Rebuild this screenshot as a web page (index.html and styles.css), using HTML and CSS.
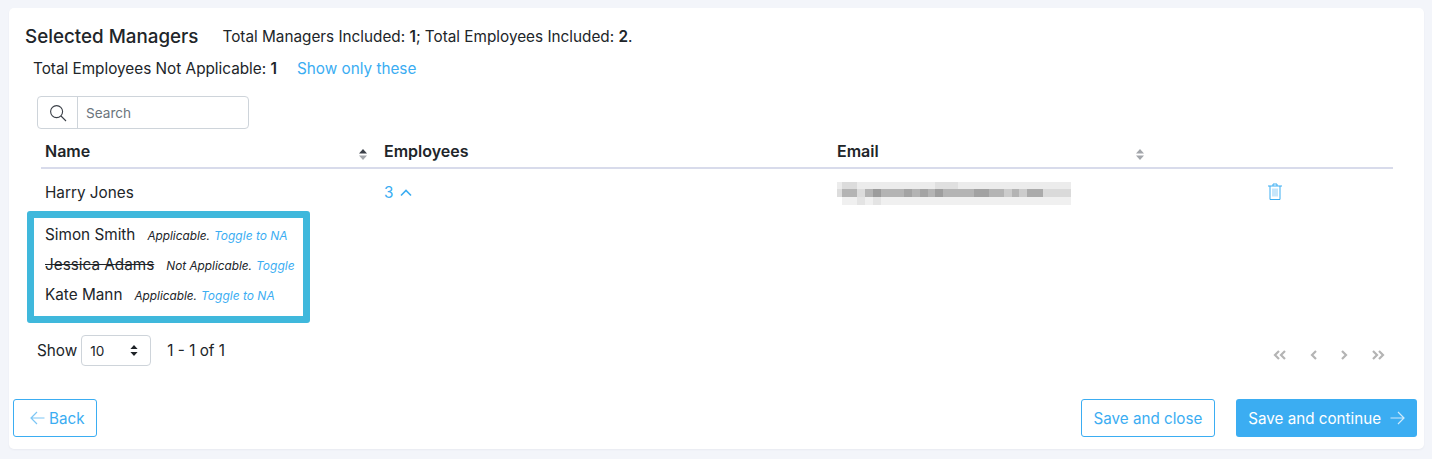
FILE: index.html
```html
<!DOCTYPE html>
<html lang="en">
<head>
<meta charset="utf-8">
<title>Selected Managers</title>
<link rel="stylesheet" href="styles.css">
</head>
<body>
<main class="card">
  <div class="summary">
    <h2 class="title">Selected Managers</h2>
    <p class="summary-text">Total Managers Included: <b>1</b>; Total Employees Included: <b>2</b>.</p>
  </div>
  <div class="na-line">
    <span>Total Employees Not Applicable: <b>1</b></span>
    <a class="link na-link" href="#">Show only these</a>
  </div>
  <div class="search">
    <span class="search-icon">
      <svg width="18" height="18" viewBox="0 0 18 18" fill="none" stroke="#3a3f47" stroke-width="1.1"><circle cx="7.6" cy="7.600" r="6"/><path d="M12 12l5 5"/></svg>
    </span>
    <span class="search-input">Search</span>
  </div>
  <div class="table">
    <div class="thead">
      <div class="th th-name">Name
        <svg class="sort" width="8" height="11" viewBox="0 0 8 11"><path d="M4 0l4 4.600H0z" fill="#3a3f47"/><path d="M4 11L0 6.400h8z" fill="#a3a6ab"/></svg>
      </div>
      <div class="th">Employees</div>
      <div class="th th-email">Email
        <svg class="sort sort-email" width="8" height="11" viewBox="0 0 8 11"><path d="M4 0l4 4.600H0z" fill="#a3a6ab"/><path d="M4 11L0 6.400h8z" fill="#a3a6ab"/></svg>
      </div>
      <div class="th"></div>
    </div>
    <div class="tr">
      <div class="td">Harry Jones</div>
      <div class="td count">3
        <svg width="12" height="8" viewBox="0 0 12 8" fill="none" stroke="#3badf2" stroke-width="1.6"><path d="M1 6.500l5-5 5 5"/></svg>
      </div>
      <div class="td">
        <svg class="blur" width="234" height="23" viewBox="0 0 234 23" shape-rendering="crispEdges">
          <rect x="0" y="0" width="234" height="7" fill="#ececec"/>
          <rect x="5" y="7" width="229" height="8" fill="#b4b4b4"/>
          <rect x="5" y="15" width="229" height="8" fill="#f0f0f0"/>
          <rect x="0" y="7" width="5" height="8" fill="#dddddd"/>
          <rect x="5" y="0" width="15" height="7" fill="#dcdcdc"/>
          <rect x="20" y="7" width="8" height="8" fill="#dcdcdc"/>
          <rect x="36" y="7" width="8" height="8" fill="#9c9c9c"/>
          <rect x="67" y="7" width="8" height="8" fill="#a4a4a4"/>
          <rect x="83" y="7" width="8" height="8" fill="#a4a4a4"/>
          <rect x="98" y="7" width="8" height="8" fill="#9e9e9e"/>
          <rect x="98" y="0" width="23" height="7" fill="#e0e0e0"/>
          <rect x="137" y="7" width="15" height="8" fill="#a2a2a2"/>
          <rect x="167" y="7" width="8" height="8" fill="#cccccc"/>
          <rect x="182" y="7" width="8" height="8" fill="#cccccc"/>
          <rect x="190" y="7" width="8" height="8" fill="#ababab"/>
          <rect x="198" y="7" width="8" height="8" fill="#ababab"/>
          <rect x="206" y="7" width="28" height="8" fill="#dadada"/>
          <rect x="20" y="15" width="8" height="8" fill="#e4e4e4"/>
          <rect x="36" y="15" width="8" height="8" fill="#e4e4e4"/>
        </svg>
      </div>
      <div class="td td-action">
        <svg width="14" height="17" viewBox="0 0 14 17" fill="none" stroke="#3badf2" stroke-width="1"><path d="M0 3h14M5 3V1h4v2M2 3v13.500h10V3"/><path d="M5 5.500v8M7 5.500v8M9 5.500v8" stroke="#8ccdf6"/></svg>
      </div>
    </div>
  </div>
  <ul class="employees">
    <li class="employee"><span class="emp-name">Simon Smith</span><em class="emp-status">Applicable.</em><a class="link toggle" href="#">Toggle to NA</a></li>
    <li class="employee"><span class="emp-name struck">Jessica Adams</span><em class="emp-status">Not Applicable.</em><a class="link toggle" href="#">Toggle</a></li>
    <li class="employee"><span class="emp-name">Kate Mann</span><em class="emp-status">Applicable.</em><a class="link toggle" href="#">Toggle to NA</a></li>
  </ul>
  <div class="pager">
    <div class="pager-left">
      <span>Show</span>
      <span class="select">10
        <svg width="8" height="11" viewBox="0 0 8 11"><path d="M4 0l3.600 4H.4zM4 11L.4 7h7.200z" fill="#1f2328"/></svg>
      </span>
      <span class="range">1 - 1 of 1</span>
    </div>
    <div class="pager-nav">
      <svg width="13" height="10" viewBox="0 0 13 10" fill="none" stroke="#b4b4b4" stroke-width="2.200"><path d="M6 1L2 5l4 4M12 1L8 5l4 4"/></svg>
      <svg width="7" height="10" viewBox="0 0 7 10" fill="none" stroke="#b4b4b4" stroke-width="2.200"><path d="M6 1L2 5l4 4"/></svg>
      <svg width="7" height="10" viewBox="0 0 7 10" fill="none" stroke="#b4b4b4" stroke-width="2.200"><path d="M1 1l4 4-4 4"/></svg>
      <svg width="13" height="10" viewBox="0 0 13 10" fill="none" stroke="#b4b4b4" stroke-width="2.200"><path d="M1 1l4 4-4 4M7 1l4 4-4 4"/></svg>
    </div>
  </div>
  <div class="actions">
    <a class="btn btn-outline btn-back" href="#">
      <svg width="15" height="14" viewBox="0 0 15 14" fill="none" stroke="#7cc6f5" stroke-width="1.200"><path d="M14.500 7H1M7 1L1 7l6 6"/></svg>
      Back
    </a>
    <div class="actions-right">
      <a class="btn btn-outline btn-close" href="#">Save and close</a>
      <a class="btn btn-solid" href="#">Save and continue
        <svg width="15" height="14" viewBox="0 0 15 14" fill="none" stroke="#cfeafb" stroke-width="1.200"><path d="M.5 7H14M8 1l6 6-6 6"/></svg>
      </a>
    </div>
  </div>
</main>
</body>
</html>
```
FILE: styles.css
```css
* { box-sizing: border-box; }

html, body { margin: 0; height: 100%; }

body {
  background: #f3f5fa;
  padding: 8px 8px 10px 9px;
  font-family: Inter, "Liberation Sans", sans-serif;
  font-size: 15.3px;
  line-height: 20px;
  color: #212529;
}

b { font-weight: 600; }

.link { color: #3badf2; text-decoration: none; }

.card {
  height: 441px;
  background: #fff;
  border-radius: 5px;
  box-shadow: 0 1px 2px rgba(30, 40, 70, .05);
  padding: 16px 7px 12px 4px;
  display: flex;
  flex-direction: column;
}

.summary {
  display: flex;
  align-items: center;
  height: 24px;
  padding: 2px 0 0 12px;
  gap: 24px;
}

.title {
  margin: 0;
  font-size: 18.8px;
  font-weight: 500;
  line-height: 24px;
}

.summary-text { margin: 0; }

.na-line {
  display: flex;
  gap: 20px;
  margin-top: 8px;
  height: 24px;
  align-items: center;
  padding: 2px 0 0 20px;
}

.search {
  display: flex;
  width: 212px;
  height: 33px;
  margin: 16px 0 0 24px;
  border: 1px solid #ced4da;
  border-radius: 4px;
}

.search-icon {
  width: 40px;
  display: flex;
  align-items: center;
  justify-content: center;
  border-right: 1px solid #ced4da;
}

.search-input {
  padding-left: 8px;
  line-height: 32px;
  font-size: 13.6px;
  color: #6c757d;
}

.table { margin-left: 28px; width: 1352px; }

.thead, .tr {
  display: grid;
  grid-template-columns: 339px 453px 430px 1fr;
}

.thead {
  height: 40px;
  border-bottom: 2px solid #d8dbeb;
  padding-top: 12px;
}

.th {
  position: relative;
  padding-left: 4px;
  font-size: 16px;
  font-weight: 600;
  line-height: 20px;
}

.sort {
  position: absolute;
  left: 318px;
  top: 8px;
}

.sort-email { left: 303px; }

.tr {
  height: 42px;
  align-items: center;
  padding-top: 6px;
}

.td { padding-left: 4px; }

.count {
  color: #3badf2;
  display: flex;
  align-items: center;
  gap: 7px;
}

.blur { display: block; margin-top: 1px; }

.td-action {
  padding-left: 5px;
  display: flex;
  margin-top: -3px;
}

.employees {
  list-style: none;
  width: 283px;
  height: 112px;
  margin: 0 0 0 14px;
  padding: 2px 0 0 11px;
  border: 7px solid #3fb8dc;
  border-radius: 3px;
}

.employee {
  display: flex;
  align-items: baseline;
  line-height: 30px;
  height: 30px;
  white-space: nowrap;
}

.emp-name { margin-right: 12px; }

.struck { text-decoration: line-through; }

.emp-status {
  font-size: 11.8px;
  margin-right: 4px;
}

.toggle {
  font-size: 12px;
  font-style: italic;
}

.pager {
  display: flex;
  justify-content: space-between;
  align-items: center;
  height: 31px;
  margin-top: 12px;
  padding: 0 32px 0 24px;
}

.pager-left { display: flex; align-items: center; }

.select {
  display: flex;
  align-items: center;
  justify-content: space-between;
  width: 70px;
  height: 31px;
  margin-left: 4px;
  padding: 0 12px 0 8px;
  border: 1px solid #ced4da;
  border-radius: 4px;
  font-size: 13.6px;
}

.range { margin-left: 16px; }

.pager-nav {
  display: flex;
  align-items: center;
  gap: 24px;
  margin-top: 9px;
}

.actions {
  display: flex;
  justify-content: space-between;
  margin-top: auto;
}

.actions-right { display: flex; gap: 21px; }

.btn {
  display: flex;
  align-items: center;
  height: 38px;
  padding: 2px 12px 0;
  border-radius: 3px;
  font-size: 15.2px;
  gap: 4px;
  text-decoration: none;
}

.btn svg { margin-top: -2px; }

.btn-outline {
  color: #3badf2;
  border: 1px solid #3badf2;
  background: #fff;
}

.btn-back { padding-left: 16px; }

.btn-close { padding-left: 11px; }

.btn-solid {
  color: #fff;
  background: #3badf2;
  gap: 9px;
}
```
